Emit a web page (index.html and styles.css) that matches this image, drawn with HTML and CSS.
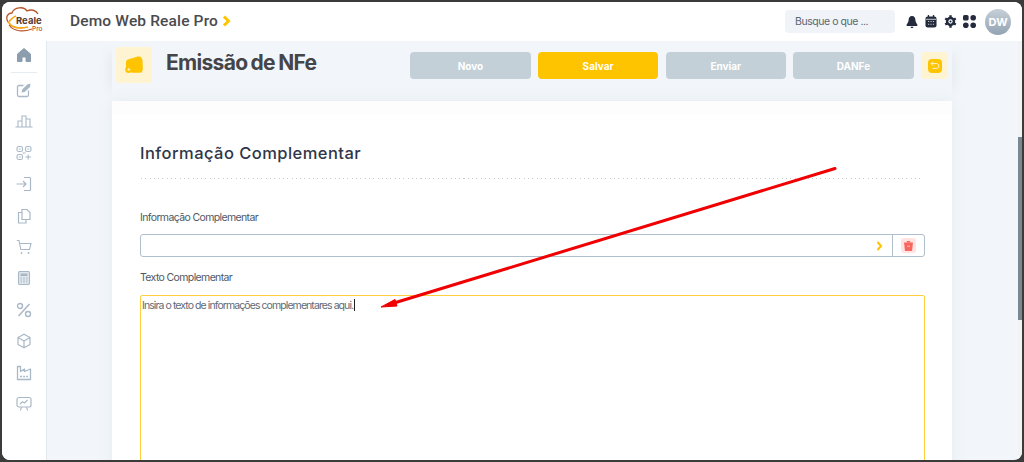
FILE: index.html
```html
<!DOCTYPE html>
<html lang="pt">
<head>
<meta charset="utf-8">
<title>Emissão de NFe</title>
<link rel="stylesheet" href="styles.css">
</head>
<body>
<div class="window">
  <header class="topbar">
    <div class="logo">
      <svg width="44" height="32" viewBox="0 0 44 32">
        <path d="M2 17C-1 12 2 8 6 8C8 2 18 1 21 6C25 4 30 5 32 9" fill="none" stroke="#b5562b" stroke-width="1.300"/>
        <path d="M2 18C5 14 7 12 10 11" fill="none" stroke="#f5a81c" stroke-width="1.600"/>
        <path d="M3 18C6 23 14 24 22 22" fill="none" stroke="#f5a81c" stroke-width="1.800"/>
        <path d="M3 20C8 27 18 27 26 24" fill="none" stroke="#b5562b" stroke-width="1.200"/>
        <text x="10" y="18.500" class="logo-reale">Reale</text>
        <text x="26" y="26" class="logo-pro">Pro</text>
      </svg>
    </div>
    <div class="brand">Demo Web Reale Pro
      <svg class="brand-chev" width="9" height="12" viewBox="0 0 9 12"><path d="M2 1.500L6.500 6L2 10.500" fill="none" stroke="#ffc400" stroke-width="3"/></svg>
    </div>
    <div class="top-actions">
      <div class="search">Busque o que ...</div>
      <svg class="ti" width="12" height="14" viewBox="0 0 13 14"><path d="M6.500 0.500C9 .5 10.200 2.600 10.200 5C10.200 7.600 12.500 9 12.500 10.600C12.500 11.200 12 11.400 11.500 11.400H1.500C1 11.400 .5 11.200 .5 10.600C.5 9 2.800 7.600 2.800 5C2.800 2.600 4 .5 6.500 .5Z M4.800 12.200H8.200C8 13.200 7.300 13.700 6.500 13.700C5.700 13.700 5 13.200 4.800 12.200Z" fill="#232b3d"/></svg>
      <svg class="ti" width="12" height="13" viewBox="0 0 13 14"><rect x="0.500" y="1.500" width="12" height="12" rx="2.500" fill="#232b3d"/><rect x="3" y="0" width="1.500" height="3" fill="#232b3d"/><rect x="8.500" y="0" width="1.500" height="3" fill="#232b3d"/><path d="M1 4.600H12" stroke="#fff" stroke-width=".8"/><path d="M3.500 7H4.500M6 7H7M8.500 7H9.500M3.500 10H4.500M6 10H7M8.500 10H9.500" stroke="#fff" stroke-width="1"/></svg>
      <svg class="ti ti-gear" width="13" height="13" viewBox="0 0 14 14"><circle cx="7" cy="7" r="5" fill="#232b3d"/><path d="M7 .4V13.600M1.300 3.700L12.700 10.300M1.300 10.300L12.700 3.700" stroke="#232b3d" stroke-width="2.600"/><circle cx="7" cy="7" r="2.300" fill="#fff"/><circle cx="7" cy="7" r="1.100" fill="#232b3d"/></svg>
      <svg class="ti ti-grid" width="13" height="13" viewBox="0 0 13 13"><rect x="0" y="0" width="5.600" height="5.600" rx="1.600" fill="#232b3d"/><rect x="7.400" y="0" width="5.600" height="5.600" rx="2.800" fill="#232b3d"/><rect x="0" y="7.400" width="5.600" height="5.600" rx="2.800" fill="#232b3d"/><rect x="7.400" y="7.400" width="5.600" height="5.600" rx="2.800" fill="#232b3d"/></svg>
      <div class="avatar">DW</div>
    </div>
  </header>
  <div class="body-row">
    <nav class="sidebar">
      <svg class="si" width="16" height="16" viewBox="0 0 16 16"><path d="M8 1.500L14.500 7V14.500H10V10H6V14.500H1.500V7Z" fill="#8c9eae" stroke="#8c9eae" stroke-linejoin="round"/></svg>
      <div class="sep"></div>
      <svg class="si" width="16" height="16" viewBox="0 0 16 16"><path d="M7.500 3.500H3C2 3.500 1.500 4 1.500 5V13C1.500 14 2 14.500 3 14.500H11C12 14.500 12.500 14 12.500 13V8.500" fill="none" stroke="#a9b8c6" stroke-width="1.300"/><path d="M5.500 10.500L6.200 7.500L11.500 2.200L14.500 1.800L14 5L8.700 10Z" fill="#a9b8c6"/></svg>
      <svg class="si" width="18" height="16" viewBox="0 0 18 16"><path d="M.5 14H17.500M3 14V8H7V14M7 14V3H11V14M11 6H15V14" fill="none" stroke="#a9b8c6" stroke-width="1.100"/></svg>
      <svg class="si" width="16" height="16" viewBox="0 0 16 16"><g fill="none" stroke="#a9b8c6" stroke-width="1.100"><rect x="1" y="1.500" width="5.500" height="5" rx="1.800"/><rect x="9.500" y="1.500" width="5.500" height="5" rx="1.800"/><rect x="1" y="9.500" width="5.500" height="5" rx="1.800"/><path d="M9.500 12H15M12.200 9.500V14.500"/></g><path d="M2.800 4H4.800M11.300 4H13.300M2.800 12H4.800M6.500 8H9.500" stroke="#a9b8c6"/></svg>
      <svg class="si" width="16" height="16" viewBox="0 0 16 16"><path d="M8 1.500H13.500C14.200 1.500 14.500 2 14.500 2.500V13.500C14.500 14 14.200 14.500 13.500 14.500H8M.5 8H10M7 5L10 8L7 11" fill="none" stroke="#a9b8c6" stroke-width="1.200"/></svg>
      <svg class="si" width="16" height="16" viewBox="0 0 16 16"><path d="M6 1.500H11L14 4.500V11.500H6Z M6 4.500H2.500V15H10V11.500" fill="none" stroke="#a9b8c6" stroke-width="1.200"/></svg>
      <svg class="si" width="16" height="16" viewBox="0 0 16 16"><path d="M.8 1.500H3L4.800 10.500H13.500L15 4.500H3.600" fill="none" stroke="#a9b8c6" stroke-width="1.100"/><circle cx="5.500" cy="14" r=".9" fill="#a9b8c6"/><circle cx="12.500" cy="14" r=".9" fill="#a9b8c6"/></svg>
      <svg class="si" width="16" height="16" viewBox="0 0 16 16"><rect x="2.500" y="1.500" width="11" height="13" rx="1.200" fill="#dfe6ec" stroke="#a9b8c6" stroke-width="1.100"/><rect x="4.500" y="3.500" width="7" height="2.500" fill="#a9b8c6"/><path d="M4.500 8H6M7.200 8H8.800M10 8H11.500M4.500 10H6M7.200 10H8.800M10 10H11.500M4.500 12H6M7.200 12H8.800M10 12H11.500" stroke="#a9b8c6"/></svg>
      <svg class="si" width="16" height="16" viewBox="0 0 16 16"><path d="M13.500 2L2.500 14" stroke="#a9b8c6" stroke-width="1.500"/><circle cx="4" cy="4" r="2.500" fill="none" stroke="#a9b8c6" stroke-width="1.400"/><circle cx="12" cy="12" r="2.500" fill="none" stroke="#a9b8c6" stroke-width="1.400"/></svg>
      <svg class="si" width="16" height="16" viewBox="0 0 16 16"><path d="M8 1.200L14 4.500V11.500L8 14.800L2 11.500V4.500ZM2 4.500L8 8L14 4.500M8 8V14.800" fill="none" stroke="#a9b8c6" stroke-width="1.200" stroke-linejoin="round"/></svg>
      <svg class="si" width="16" height="16" viewBox="0 0 16 16"><path d="M1.500 1.500H4.500V6.500L8.500 4V6.500L14.500 4V14.500H1.500Z" fill="none" stroke="#a9b8c6" stroke-width="1.300" stroke-linejoin="round"/><path d="M4 11.500H6M7.200 11.500H9M10.200 11.500H12" stroke="#a9b8c6" stroke-width="1.300"/></svg>
      <svg class="si" width="16" height="16" viewBox="0 0 16 16"><rect x="1" y="1.500" width="14" height="9.500" rx="2" fill="none" stroke="#a9b8c6" stroke-width="1.200"/><path d="M4 8L6.500 5.800L8.500 7L11.500 4M5.500 11L4.500 14.500M10.500 11L11.500 14.500" fill="none" stroke="#a9b8c6" stroke-width="1.100"/></svg>
    </nav>
    <main class="main">
      <div class="content">
        <section class="page-head">
          <div class="head-left">
            <div class="head-icon">
              <svg width="20" height="18" viewBox="0 0 20 18"><path d="M2 6C2 4.500 3 3.800 4 3.400L12 1C15 .2 17 .6 18 2.500C18.600 4 18.800 8 18.800 12C18.800 15 18 16.800 16 16.800H8C8.400 13 5.500 10.500 2 11Z" fill="#ffc400"/><circle cx="4.800" cy="13.500" r="3.600" fill="#ffc400"/><path d="M3.200 13.500H6.400M4.800 11.900V15.100" stroke="#fff4d0" stroke-width=".9"/></svg>
            </div>
            <h1 class="head-title">Emissão de NFe</h1>
          </div>
          <div class="head-buttons">
            <div class="btn">Novo</div>
            <div class="btn btn-save">Salvar</div>
            <div class="btn">Enviar</div>
            <div class="btn">DANFe</div>
            <div class="back-wrap">
              <div class="back">
                <svg width="10" height="9" viewBox="0 0 10 9"><path d="M1.200 2.600H6.500C8 2.600 8.900 3.600 8.900 5C8.900 6.400 8 7.400 6.500 7.400H2.500M3 .6L1 2.600L3 4.600" fill="none" stroke="#fff6d8" stroke-width="1"/></svg>
              </div>
            </div>
          </div>
        </section>
        <section class="card">
          <div class="card-strip"></div>
          <div class="card-body">
            <h2 class="card-title">Informação Complementar</h2>
            <div class="rule"></div>
            <label class="field-label">Informação Complementar</label>
            <div class="select-row">
              <div class="select-input">
                <svg width="7" height="10" viewBox="0 0 7 10"><path d="M1.500 1L5 5L1.500 9" fill="none" stroke="#ffc400" stroke-width="2"/></svg>
              </div>
              <div class="select-action">
                <div class="trash">
                  <svg width="9" height="10" viewBox="0 0 9 10"><path d="M0 1.600H9L8 10H1Z" fill="#f8675f"/><rect x="2.800" y="0" width="3.400" height="1.600" fill="#f8675f"/><path d="M3 5.200H6" stroke="#ffd4d0" stroke-width=".8"/></svg>
                </div>
              </div>
            </div>
            <label class="field-label field-label-2">Texto Complementar</label>
            <div class="textarea">Insira o texto de informações complementares aqui.<span class="caret"></span></div>
          </div>
        </section>
      </div>
      <div class="scrollbar"><div class="thumb"></div></div>
    </main>
  </div>
  <svg class="arrow" width="1024" height="462" viewBox="0 0 1024 462">
    <path d="M835 168.500L394 303" stroke="#f00000" stroke-width="3" stroke-linecap="round"/>
    <path d="M381 307L395 299.500L397 306Z" fill="#f00000" stroke="#f00000" stroke-linejoin="round"/>
  </svg>
</div>
</body>
</html>
```
FILE: styles.css
```css
* { box-sizing: border-box; }
html, body { margin: 0; height: 100%; }
body {
  background: #3b3b3b;
  font-family: "Inter", "Liberation Sans", sans-serif;
  overflow: hidden;
  padding: 2px;
}
.window {
  height: 458px;
  width: 1020px;
  border-radius: 8px;
  overflow: hidden;
  background: #f2f6fa;
  display: flex;
  flex-direction: column;
}
.topbar {
  height: 39px;
  flex: none;
  background: #fff;
  display: flex;
  align-items: center;
  padding: 0 11px 0 4px;
  position: relative;
  z-index: 2;
}
.logo { width: 64px; height: 32px; margin-top: -2px; }
.logo-reale { font: 700 9.5px "Inter", sans-serif; fill: #5c3a2a; }
.logo-pro { font: 500 6.5px "Inter", sans-serif; fill: #b5562b; }
.brand {
  font: 500 15.5px "Roboto", sans-serif;
  letter-spacing: .15px;
  color: #4a4a4e;
  display: flex;
  align-items: center;
  gap: 4px;
  margin-top: -1px;
}
.top-actions { margin-left: auto; display: flex; align-items: center; }
.search {
  width: 110px;
  height: 23px;
  background: #f0f4f8;
  border-radius: 4px;
  font-size: 10.5px;
  letter-spacing: -.45px;
  color: #5b6672;
  display: flex;
  align-items: center;
  padding-left: 10px;
  margin-right: 11px;
}
.ti { margin-right: 7px; }
.ti-gear { margin-right: 6px; }
.ti-grid { margin-right: 9px; }
.avatar {
  width: 26px;
  height: 26px;
  border-radius: 50%;
  background: linear-gradient(#c6d0d9, #93a3b2);
  color: #fff;
  font-size: 11px;
  font-weight: 700;
  display: flex;
  align-items: center;
  justify-content: center;
}
.body-row { flex: 1; display: flex; min-height: 0; }
.sidebar {
  width: 45px;
  flex: none;
  background: #fff;
  border-right: 1px solid #e4e9ee;
  display: flex;
  flex-direction: column;
  align-items: center;
  padding: 6px 1px 0 0;
  gap: 15.4px;
}
.sep { width: 26px; height: 1px; background: #e6ebf0; margin: -6.4px 0; }
.si { flex: none; }
.main { flex: 1; display: flex; min-width: 0; }
.content { flex: 1; min-width: 0; padding: 0 66px 0 65px; }
.page-head { height: 60px; display: flex; justify-content: space-between; align-items: flex-start; padding-top: 6px; box-shadow: -14px 0 12px -12px #e4e9ee, 14px 0 12px -12px #e4e9ee; }
.head-left { display: flex; align-items: flex-start; }
.head-icon {
  width: 36px;
  height: 36px;
  background: #fff4d2;
  border-radius: 3px;
  margin-left: 4px;
  display: flex;
  align-items: center;
  justify-content: center;
}
.head-title {
  margin: 2px 0 0 14px;
  font-size: 21px;
  font-weight: 700;
  letter-spacing: -.7px;
  word-spacing: -1px;
  color: #454549;
  line-height: 27px;
}
.head-buttons { display: flex; align-items: flex-start; padding-top: 5px; gap: 7.4px; margin-right: 4px; }
.btn {
  width: 120.3px;
  height: 27px;
  border-radius: 4px;
  background: #c3d0d8;
  color: #fff;
  font-size: 10px;
  font-weight: 700;
  display: flex;
  align-items: center;
  justify-content: center;
}
.btn-save { background: #ffc400; }
.back-wrap { width: 27px; height: 27px; background: #fff4d2; border-radius: 4px; display: flex; align-items: center; justify-content: center; }
.back { width: 14px; height: 14px; background: #ffc400; border-radius: 4px; display: flex; align-items: center; justify-content: center; }
.card { background: #fff; height: 400px; box-shadow: 0 0 14px #e6ebf0; }
.card-strip { height: 13px; background: #fdfdfd; }
.card-body { padding: 29px 27px 0 28px; }
.card-title {
  margin: 0;
  font: 500 16.5px "Inter", sans-serif;
  letter-spacing: .45px;
  color: #2f3648;
  line-height: 20px;
}
.rule {
  height: 1px;
  margin: 15px 1px 0 1px;
  background: repeating-linear-gradient(90deg, #c6cbd0 0 1px, transparent 1px 4.3px);
}
.field-label {
  display: block;
  margin-top: 32px;
  font-size: 10.5px;
  letter-spacing: -.63px;
  color: #4d5866;
  line-height: 14px;
}
.field-label-2 { margin-top: 14px; }
.select-row {
  display: flex;
  height: 23px;
  margin-top: 9px;
  border: 1px solid #afbfcd;
  border-radius: 3px;
}
.select-input { flex: 1; display: flex; align-items: center; justify-content: flex-end; padding-right: 9px; }
.select-action { width: 32px; border-left: 1px solid #afbfcd; display: flex; align-items: center; justify-content: center; }
.trash { width: 15px; height: 15px; background: #ffe3e1; border-radius: 3px; display: flex; align-items: center; justify-content: center; }
.textarea {
  margin-top: 10px;
  height: 200px;
  border: 1px solid #ffcf3f;
  border-radius: 2px;
  padding: 2px 1px;
  font-size: 10.5px;
  letter-spacing: -.92px;
  line-height: 15px;
  color: #5f6a76;
}
.caret { display: inline-block; width: 1px; height: 12px; background: #222; vertical-align: -2px; margin-left: 1px; }
.scrollbar { width: 4px; flex: none; background: #f2f3f4; }
.thumb { height: 183px; margin-top: 96px; background: #7a8894; }
.arrow { position: absolute; left: 0; top: 0; z-index: 5; pointer-events: none; }
```
